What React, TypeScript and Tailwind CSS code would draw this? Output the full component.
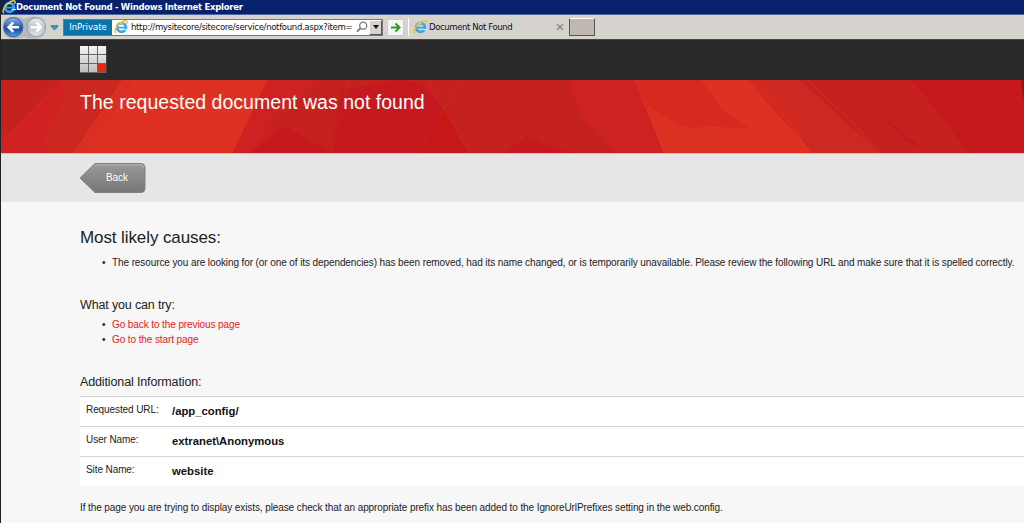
import React from 'react';

interface InfoRow {
  label: string;
  value: string;
}

const infoRows: InfoRow[] = [
  { label: 'Requested URL:', value: '/app_config/' },
  { label: 'User Name:', value: 'extranet\\Anonymous' },
  { label: 'Site Name:', value: 'website' },
];

function ExplorerIcon({ className }: { className: string }): React.JSX.Element {
  return (
    <svg className={className} viewBox="0 0 16 16" fill="none">
      <circle cx="8.6" cy="8.6" r="5" stroke="#3aa5e0" strokeWidth="3.2" />
      <path d="M5 8.7h10" stroke="#3aa5e0" strokeWidth="2" />
      <path d="M11 10.9h5" stroke="#d9e9f0" strokeWidth="1.3" />
      <path d="M4.8 6A5 5 0 0 1 11 4.4" stroke="#8bd4f5" strokeWidth="1" />
      <path
        d="M2.7 14.8C.2 14.7 1 10.4 4.2 6.4 7.7 2.2 12.8-.2 14.5 1.3c.8.8.5 2-.2 3.2"
        stroke="#f3c430"
        strokeWidth="1.7"
      />
    </svg>
  );
}

// Back / forward buttons with the history arrow
function NavButtons(): React.JSX.Element {
  return (
    <svg className="h-[25px] w-[62px] shrink-0" viewBox="0 0 62 25" fill="none">
      <defs>
        <linearGradient id="backFill" x1="0" y1="0" x2="0" y2="1">
          <stop offset="0" stopColor="#8fb4e6" />
          <stop offset="0.45" stopColor="#2866bd" />
          <stop offset="0.6" stopColor="#174ba5" />
          <stop offset="1" stopColor="#4aa5ef" />
        </linearGradient>
        <linearGradient id="forwardFill" x1="0" y1="0" x2="0" y2="1">
          <stop offset="0" stopColor="#e9edf1" />
          <stop offset="0.5" stopColor="#b9c3cf" />
          <stop offset="1" stopColor="#dfe7ee" />
        </linearGradient>
      </defs>
      <path d="M4 4Q13-1 23 4q10-5 19 0 6 9 0 17-9 5-19 1-10 4-19-1-5-8 0-17z" fill="#b4b8ba" />
      <circle cx="12.3" cy="12.2" r="9.6" fill="url(#backFill)" stroke="#41618f" />
      <circle cx="35.3" cy="12.2" r="9.3" fill="url(#forwardFill)" stroke="#929ba5" />
      <path d="M18 12.2H8M12.3 7.5l-4.7 4.7 4.7 4.7" stroke="#fff" strokeWidth="2.5" />
      <path d="M29.5 12.2h10M35.3 7.5l4.7 4.7-4.7 4.7" stroke="#fff" strokeWidth="2.5" />
      <path d="M50 10.7h7l-.6 1.4-2.9 2.8-2.9-2.8z" fill="#31a0d1" stroke="#27688c" strokeWidth=".8" />
    </svg>
  );
}

function BrowserChrome(): React.JSX.Element {
  return (
    <div className="font-['DejaVu_Sans_Condensed','DejaVu_Sans',sans-serif]">
      <div className="flex h-[15px] items-center border-b border-[#52659c] bg-[#08216b] pl-[1px]">
        <ExplorerIcon className="h-[14px] w-[14px] shrink-0" />
        <span className="whitespace-nowrap text-[9.5px] leading-[14px] font-bold tracking-[-0.3px] text-white">
          Document Not Found - Windows Internet Explorer
        </span>
      </div>
      <div className="flex h-[24px] items-center bg-[#d6d3ce] text-[9.5px] text-[#111]">
        <NavButtons />
        <div className="flex h-[17px] w-[320px] shrink-0 items-center border border-[#777] bg-white">
          <div className="flex h-[15px] w-[48px] shrink-0 items-center justify-center bg-[#0a74ad] text-white">
            InPrivate
          </div>
          <ExplorerIcon className="ml-[2px] h-[14px] w-[14px] shrink-0" />
          <span className="ml-[3px] w-[225px] whitespace-nowrap tracking-[-0.33px]">
            http://mysitecore/sitecore/service/notfound.aspx?item=
          </span>
          <svg className="h-[12px] w-[12px] shrink-0" viewBox="0 0 12 12" fill="none">
            <circle cx="7.2" cy="4.7" r="3.5" stroke="#777" strokeWidth="1.3" />
            <path d="M4.5 7.2 1 10.7" stroke="#777" strokeWidth="1.8" />
          </svg>
          <div className="ml-[1px] flex h-[15px] w-[13px] shrink-0 items-center justify-center border border-t-white border-r-[#555] border-b-[#555] border-l-white bg-[#d6d3ce]">
            <svg className="h-[4px] w-[6px]" viewBox="0 0 6 4">
              <path d="M0 0h6L3 4z" fill="#111" />
            </svg>
          </div>
        </div>
        <div className="ml-[4px] flex h-[17px] w-[17px] shrink-0 items-center justify-center border border-[#c3cdd2] bg-[#f4f6f6]">
          <svg className="h-[11px] w-[11px]" viewBox="0 0 11 11" fill="none" stroke="#299b22" strokeWidth="2">
            <path d="M1 5.5h8M5.5 1.5l4 4-4 4" />
          </svg>
        </div>
        <div className="ml-[4px] flex h-[18px] w-[161px] shrink-0 items-center border-l border-white pl-[4px]">
          <ExplorerIcon className="h-[14px] w-[14px] shrink-0" />
          <span className="ml-[2px] flex-1 whitespace-nowrap tracking-[-0.42px]">Document Not Found</span>
          <svg className="mr-[5px] h-[8px] w-[8px]" viewBox="0 0 8 8" stroke="#8f8c88" strokeWidth="1.5">
            <path d="M1 1l6 6M7 1 1 7" />
          </svg>
        </div>
        <div className="h-[18px] w-[26px] shrink-0 border border-t-white border-r-[#555] border-b-[#555] border-l-[#555] bg-[#bfb9b2]" />
      </div>
    </div>
  );
}

function SiteLogo(): React.JSX.Element {
  return (
    <svg className="h-[27px] w-[27px]" viewBox="0 0 27 27">
      <defs>
        <linearGradient id="tileFill" gradientUnits="userSpaceOnUse" x1="0" y1="0" x2="0" y2="27">
          <stop offset="0" stopColor="#f4f4f4" />
          <stop offset="1" stopColor="#bdbdbd" />
        </linearGradient>
      </defs>
      <rect width="26.5" height="27" fill="#666" />
      <path
        d="M0 0h8v8H0zM9 0h8v8H9zM18 0h8v8h-8zM0 9h8v8H0zM9 9h8v8H9zM18 9h8v8h-8zM0 18h8v8H0zM9 18h8v8H9z"
        fill="url(#tileFill)"
      />
      <path d="M18 18h8v8h-8z" fill="#e8290f" />
    </svg>
  );
}

// Faceted red backdrop of the title banner
function BannerArt(): React.JSX.Element {
  return (
    <svg className="absolute inset-0 h-full w-full" viewBox="0 0 1023 73" preserveAspectRatio="none">
      <rect width="1023" height="73" fill="#c4211f" />
      <path d="M60 0h64L73 73H0V62z" fill="#d02321" />
      <path d="M62 0h62L73 73H46L43 55l18-32z" fill="#cc2820" />
      <path d="M122 0h144l-35 73H73z" fill="#df3122" />
      <path d="M122 0h12L98 55l-14 18H73z" fill="#db2f24" />
      <path d="M266 0h51l-48 45-20 28h-17z" fill="#cd2221" />
      <path d="M284 46 330 73H249z" fill="#c5181f" />
      <path d="M340 10 395 0l26 3 22 27-27 43h-86z" fill="#c5181f" />
      <path d="M443 30 468 73h-52z" fill="#c71818" />
      <path d="m526 56 16 8 35 9h-75z" fill="#c5181f" />
      <path d="M568 0h66l29 73h-48l-36-38z" fill="#cd2221" />
      <path d="M634 0h112c32 24 48 51 65 73H663z" fill="#df3122" />
      <path d="M634 0h66l21 29 29 20-44-3-32 5-27-21z" fill="#d82921" />
      <path d="m646 25 34 21 57 6-22 21h-52z" fill="#da3121" />
      <path d="M746 0h53l80 73h-68C798 49 776 22 746 0z" fill="#cb2921" />
      <path d="M746 0h33l32 37-10 24z" fill="#d02921" />
      <path d="m880 35 47 38-26-15z" fill="#c5181f" />
      <path d="M910 0h113v73h-55l-37-49z" fill="#c5181f" />
      <path d="M1020 0h3v21z" fill="#8d170c" />
      <g fill="none" stroke="#e33b2c" strokeWidth=".8" opacity=".7">
        <path d="M122 0 73 73M266 0l-35 73M634 0l29 73M746 0c31 23 47 50 65 73M808 0c10 14 47 43 71 73" />
        <path d="M60 0 0 62M348 0l-18 73M427 0l41 73M462 0l-46 73" opacity=".55" />
      </g>
    </svg>
  );
}

function BackButton(): React.JSX.Element {
  return (
    <button className="relative flex h-[30px] w-[66px] items-center pl-[26px] text-[10px] text-white">
      <svg className="absolute inset-0 h-full w-full" viewBox="0 0 66 30">
        <defs>
          <linearGradient id="buttonFill" x1="0" y1="0" x2="0" y2="1">
            <stop offset="0" stopColor="#999" />
            <stop offset="1" stopColor="#777" />
          </linearGradient>
        </defs>
        <path
          d="M15 .5h46q4 0 4 4v21q0 4-4 4H15L1 16q-1-1 0-2z"
          fill="url(#buttonFill)"
          stroke="#808080"
        />
        <path d="M15 1.8h45q3 0 4 3" fill="none" stroke="#bbb" strokeWidth=".8" />
      </svg>
      <span className="relative pb-[2px]">Back</span>
    </button>
  );
}

export default function App(): React.JSX.Element {
  return (
    <div className="h-[523px] w-[1024px] overflow-hidden border-l border-[#222] bg-[#f7f7f7] font-['Liberation_Sans',Arial,sans-serif] text-[10px] tracking-[-0.095px] text-[#222]">
      <div className="tracking-normal">
        <BrowserChrome />
      </div>

      <header className="h-[41px] border-t border-[#444] bg-[#292929] pt-[6px] pl-[79px]">
        <SiteLogo />
      </header>

      <div className="relative h-[73px] pt-[10px] pl-[79px]">
        <BannerArt />
        <h1 className="relative whitespace-nowrap text-[19.5px] leading-[24px] tracking-[0.03px] text-white">
          The requested document was not found
        </h1>
      </div>

      <div className="h-[49px] border-t border-[#e9b5b2] bg-[#e6e6e6] pt-[9px] pl-[79px]">
        <BackButton />
      </div>

      <main className="pl-[79px]">
        <h2 className="pt-[26px] text-[17px] leading-[20px]">Most likely causes:</h2>
        <ul className="mt-[7px] pl-[22px] leading-[15px]">
          <li className="flex whitespace-nowrap">
            <span className="w-[10px] shrink-0">•</span>
            <span>
              The resource you are looking for (or one of its dependencies) has been removed, had its name changed, or
              is temporarily unavailable. Please review the following URL and make sure that it is spelled correctly.
            </span>
          </li>
        </ul>

        <h3 className="mt-[27px] text-[12.5px] leading-[16px] tracking-[-0.15px]">What you can try:</h3>
        <ul className="mt-[4px] pl-[22px] leading-[15px]">
          <li className="flex">
            <span className="w-[10px]">•</span>
            <a className="text-[#e4211b]">Go back to the previous page</a>
          </li>
          <li className="flex">
            <span className="w-[10px]">•</span>
            <a className="text-[#e4211b]">Go to the start page</a>
          </li>
        </ul>

        <h3 className="mt-[27px] text-[12.5px] leading-[16px] tracking-[-0.13px]">Additional Information:</h3>
        <div className="mt-[6px]">
          {infoRows.map((row) => (
            <div key={row.label} className="flex h-[30px] border-t border-[#d5d5d5] bg-white pl-[6px]">
              <span className="w-[86px] pt-[7px] leading-[12px]">{row.label}</span>
              <span className="pt-[7px] text-[11.3px] leading-[14px] font-bold tracking-normal text-[#111]">
                {row.value}
              </span>
            </div>
          ))}
        </div>
        <p className="mt-[14px] leading-[15px] whitespace-nowrap">
          If the page you are trying to display exists, please check that an appropriate prefix has been added to the
          IgnoreUrlPrefixes setting in the web.config.
        </p>
      </main>
    </div>
  );
}
